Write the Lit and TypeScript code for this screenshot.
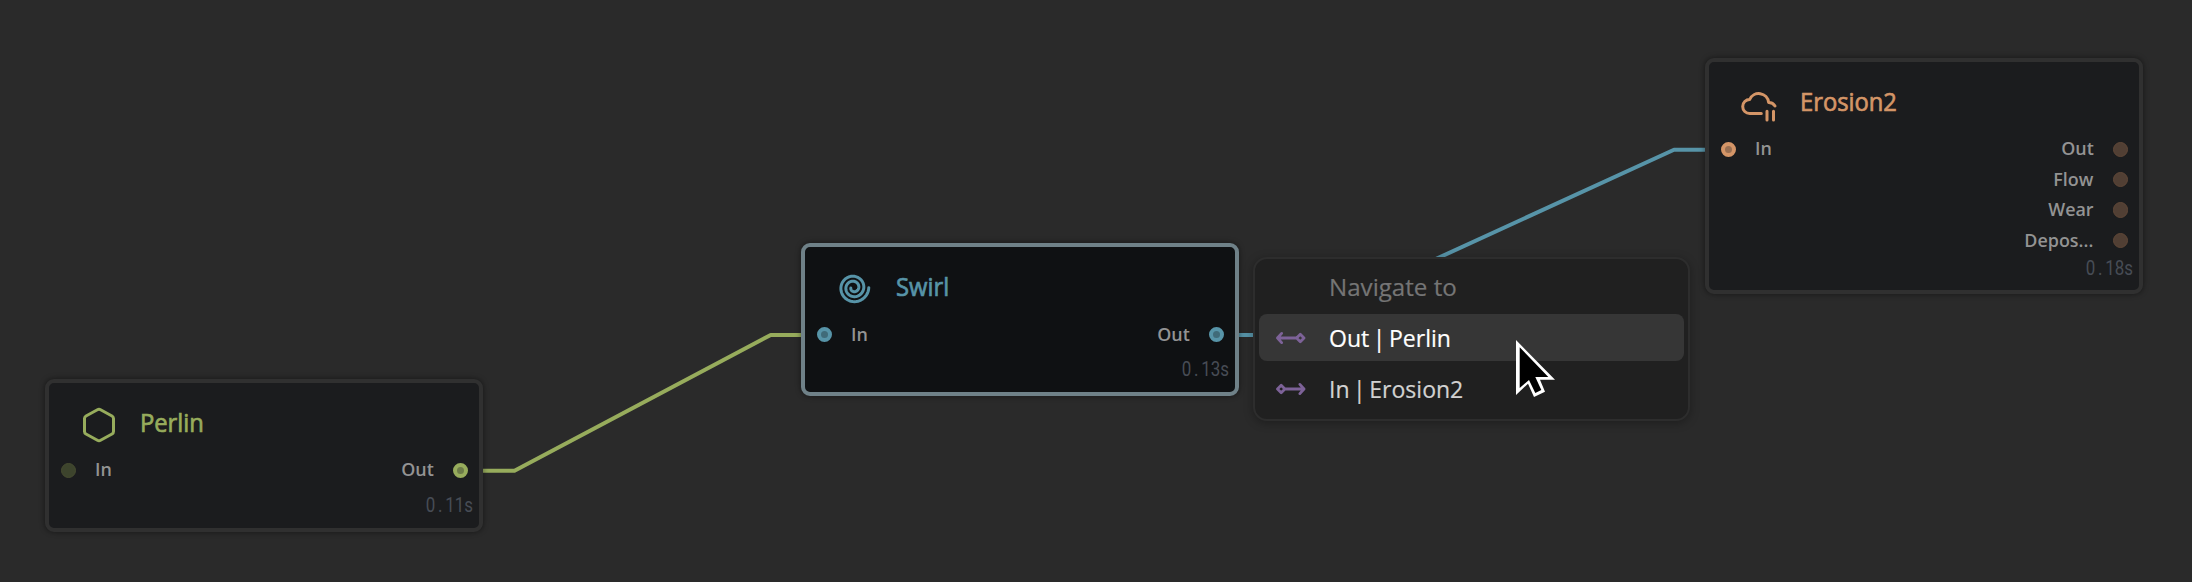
import { LitElement, html, svg, css } from "lit";
import { customElement, property } from "lit/decorators.js";

interface Port { label: string; on: boolean; }
interface NodeData {
  kind: string; title: string; time: string;
  ins: Port[]; outs: Port[];
}

const spiral = (): string => {
  const pts: string[] = [];
  for (let a = 0; a <= 2.5; a += 0.02) {
    const r = 15.2 - 5.0 * a;
    const t = a * Math.PI * 2;
    pts.push(`${(18.6 + r * Math.cos(t)).toFixed(2)} ${(18.7 + r * Math.sin(t)).toFixed(2)}`);
  }
  return "M" + pts.join("L");
};

const icons: Record<string, unknown> = {
  perlin: svg`<path d="M18.4 4.8Q20 3.9 21.6 4.8L33 11Q34.5 12 34.5 13.6V26.4Q34.5 28 33 29L21.6 35.2Q20 36.1 18.4 35.2L7 29Q5.5 28 5.5 26.4V13.6Q5.5 12 7 11Z"/>`,
  swirl: svg`<path d=${spiral()}/>`,
  erosion: svg`<path d="M22.3 29.5H10.7A7 7 0 0 1 10.7 15.5A9.9 9.9 0 0 1 29.6 18.4A7.2 7.2 0 0 1 36 22M28 27.2V36M34.5 27.2V36"/>`,
};

@customElement("graph-node")
export class GraphNode extends LitElement {
  @property({ attribute: false }) data!: NodeData;

  static styles = css`
    :host { display: block; }
    .card {
      box-sizing: border-box; width: 438px; height: 100%;
      border: 4px solid #303030; border-radius: 9px;
      background: #1b1c1e; display: flex; flex-direction: column;
      box-shadow: 0 0 5px 1px rgba(0, 0, 0, 0.35);
      font-family: "Open Sans", "Noto Sans", sans-serif;
    }
    .perlin { --c: #97ac5c; --dim: #3d442d; --rim: #474c30; --core: #6c7b48; }
    .swirl { --c: #5794a8; --core: #406b79; background: #0f1113; border-color: #6f8188; }
    .erosion { --c: #d49567; --dim: #513f34; --rim: #604737; --core: #996f52; --time-gap: 8.6px; }
    .head { display: flex; align-items: center; height: 64.2px; padding: 8px 0 0 29.7px; }
    .icon { width: 40px; height: 40px; margin-top: 3px; fill: none; stroke: var(--c); stroke-width: 3; stroke-linecap: round; stroke-linejoin: round; }
    .title { color: var(--c); font-size: 25px; line-height: 34px; -webkit-text-stroke: 0.7px var(--c); margin: 0 0 2px 21.7px; transform-origin: 0 50%; transform: scaleX(0.95); white-space: nowrap; }
    .ports { display: flex; justify-content: space-between; padding: 0 11px 0 11.6px; }
    .row { display: flex; align-items: center; height: 30.4px; gap: 19px; }
    .out { flex-direction: row-reverse; }
    .dot { box-sizing: border-box; width: 15.4px; height: 15.4px; border-radius: 50%; background: var(--dim); border: 1.5px solid var(--rim); }
    .on { background: var(--core); border: 4px solid var(--c); }
    .label { color: #939393; font-size: 18px; line-height: 24px; font-weight: 600; margin-bottom: 2px; transform-origin: 0 50%; transform: scaleX(0.995); }
    .out .label { transform-origin: 100% 50%; }
    .time { margin-top: auto; margin-right: 6px; padding-bottom: var(--time-gap, 10px); text-align: right; font: 400 19.7px/24px Roboto, sans-serif; color: #474c55; transform-origin: 100% 50%; transform: scaleX(0.86); }
    .point { margin: 0 3.2px; }
  `;

  private row(p: Port, side: string) {
    return html`<div class="row ${side}"><span class="dot ${p.on ? "on" : ""}"></span><span class="label">${p.label}</span></div>`;
  }

  render() {
    const d = this.data;
    const [a, b] = d.time.split(".");
    return html`<div class="card ${d.kind}">
      <div class="head"><svg class="icon" viewBox="0 0 40 40">${icons[d.kind]}</svg><span class="title">${d.title}</span></div>
      <div class="ports">
        <div>${d.ins.map((p) => this.row(p, "in"))}</div>
        <div>${d.outs.map((p) => this.row(p, "out"))}</div>
      </div>
      <div class="time">${a}<span class="point">.</span>${b}</div>
    </div>`;
  }
}

@customElement("nav-menu")
export class NavMenu extends LitElement {
  static styles = css`
    :host { display: block; }
    .menu {
      box-sizing: border-box; width: 437px; height: 164px; padding: 4px;
      border: 2.5px solid #2d2d2d; border-radius: 14px; background: #202020;
      box-shadow: 0 2px 8px 1px rgba(0, 0, 0, 0.25);
      font: 400 24.5px/46px "Open Sans", "Noto Sans", sans-serif; color: #d2d2d2;
      display: flex; flex-direction: column; gap: 4.7px;
    }
    .item { box-sizing: border-box; height: 46.6px; border-radius: 8px; display: flex; align-items: center; padding-left: 17px; }
    .heading { color: #757575; padding-top: 1.4px; }
    .active { background: #363636; color: #fff; }
    .glyph { width: 30px; height: 16px; margin-right: 22.5px; fill: none; stroke: #7d6298; stroke-width: 2.8; stroke-linecap: round; stroke-linejoin: round; }
    .text { transform-origin: 0 50%; transform: scaleX(0.94); white-space: nowrap; word-spacing: -2.6px; -webkit-text-stroke: 0.2px currentColor; }
    .heading .text { transform: scaleX(0.985); word-spacing: 0; }
  `;

  render() {
    return html`<div class="menu">
      <div class="item heading"><svg class="glyph"></svg><span class="text">Navigate to</span></div>
      <div class="item active">
        <svg class="glyph" viewBox="0 0 30 16"><path d="M5.6 3.4L1.5 8L5.6 12.6M1.5 8H20M24.3 4.3L28 8L24.3 11.7L20.6 8Z"/></svg>
        <span class="text">Out | Perlin</span>
      </div>
      <div class="item">
        <svg class="glyph" viewBox="0 0 30 16"><path d="M23.9 3.4L28 8L23.9 12.6M28 8H10M5.2 4.3L1.5 8L5.2 11.7L8.9 8Z"/></svg>
        <span class="text">In | Erosion2</span>
      </div>
    </div>`;
  }
}

@customElement("app-root")
export class AppRoot extends LitElement {
  static styles = css`
    :host { display: block; }
    .canvas { position: relative; width: 2192px; height: 582px; background: #2a2a2a; overflow: hidden; }
    .wires { position: absolute; inset: 0; fill: none; stroke-width: 4; stroke-linejoin: round; }
    .green { stroke: #97ac5c; }
    .blue { stroke: #5794a8; }
    .n1, .n2, .n3, .menu, .cursor { position: absolute; }
    .n1 { left: 45px; top: 379px; height: 153px; }
    .n2 { left: 801px; top: 243.4px; height: 152.7px; }
    .n3 { left: 1705px; top: 58px; height: 236px; }
    .menu { left: 1253px; top: 257px; }
    .cursor { left: 1514px; top: 338px; }
    .edge { fill: #fff; }
    .fill { fill: #000; }
  `;

  private nodes: NodeData[] = [
    { kind: "perlin", title: "Perlin", time: "0.11s", ins: [{ label: "In", on: false }], outs: [{ label: "Out", on: true }] },
    { kind: "swirl", title: "Swirl", time: "0.13s", ins: [{ label: "In", on: true }], outs: [{ label: "Out", on: true }] },
    { kind: "erosion", title: "Erosion2", time: "0.18s", ins: [{ label: "In", on: true }], outs: ["Out", "Flow", "Wear", "Depos..."].map((label) => ({ label, on: false })) },
  ];

  render() {
    return html`<div class="canvas">
      <svg class="wires" width="2192" height="582">
        <path class="green" d="M482 470.7H514.5L770.7 334.9H803"/>
        <path class="blue" d="M1238 335H1270L1674 149.8H1706"/>
      </svg>
      ${this.nodes.map((n, i) => html`<graph-node class="n${i + 1}" .data=${n}></graph-node>`)}
      <nav-menu class="menu"></nav-menu>
      <svg class="cursor" width="44" height="62" viewBox="0 0 44 62">
        <path class="edge" d="M2 2V57L14 45.7L20 59L31 53.7L26 41.7H41Z"/>
        <path class="fill" d="M5.7 9.3V50L15 42L21.3 55L27.3 52L21.3 39H34.3Z"/>
      </svg>
    </div>`;
  }
}
